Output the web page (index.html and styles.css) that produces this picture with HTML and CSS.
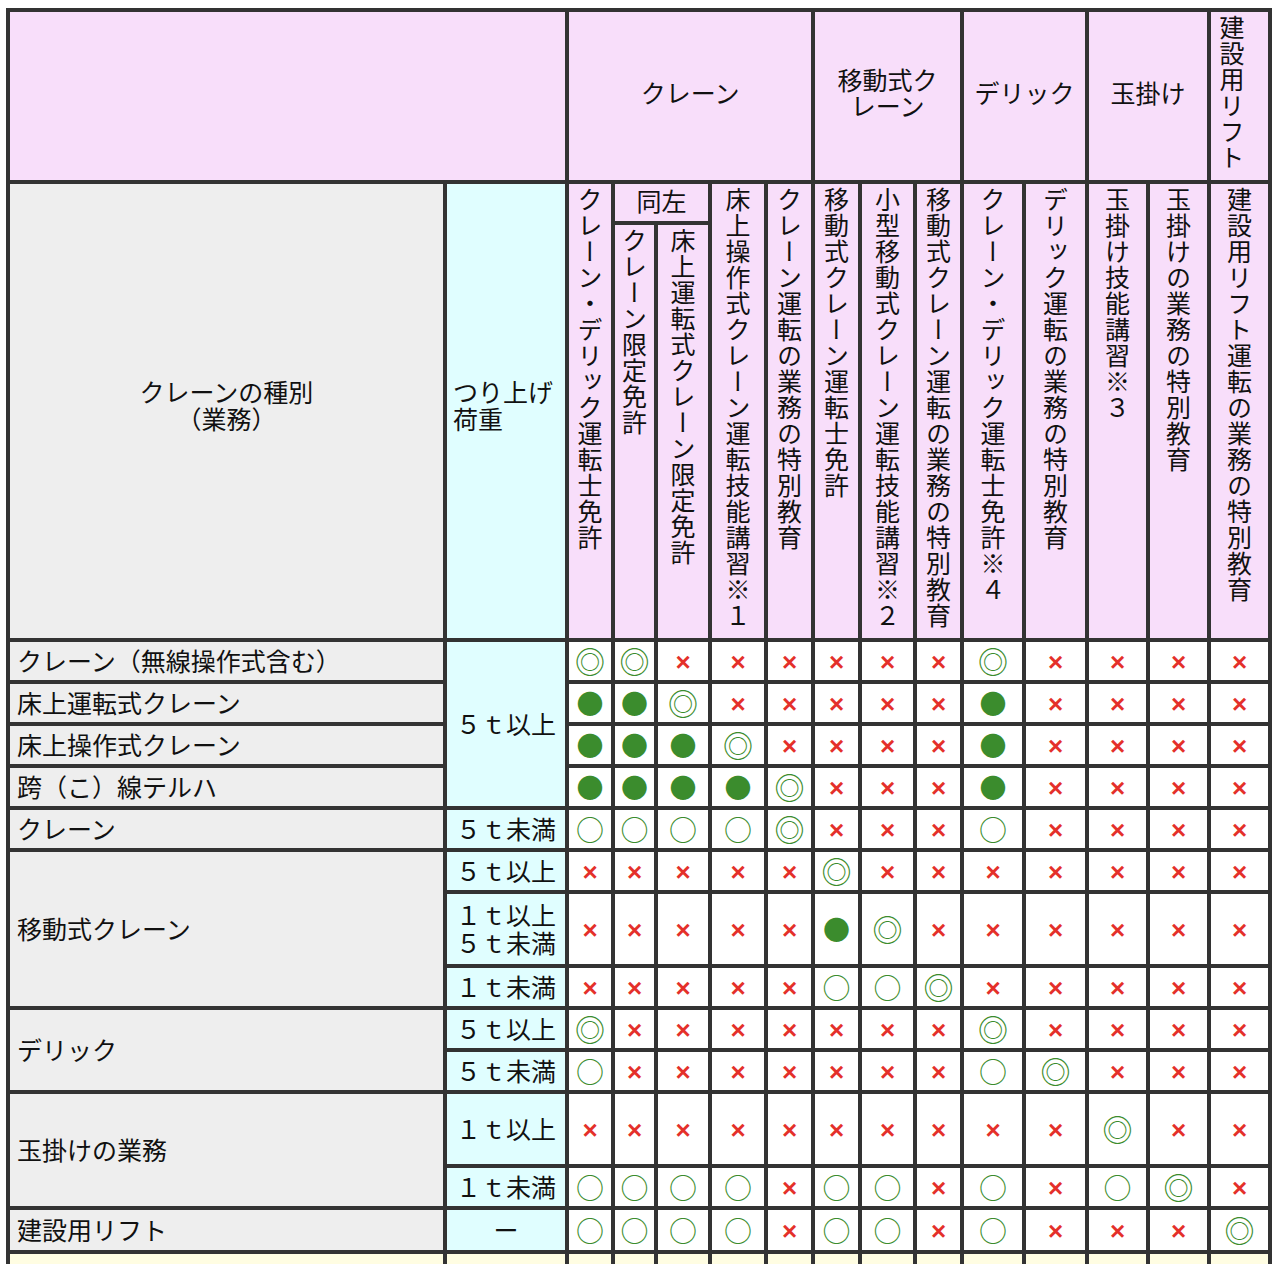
FILE: index.html
```html
<!DOCTYPE html>
<html lang="ja">
<head>
<meta charset="utf-8">
<title>クレーン等の運転資格一覧</title>
<link rel="stylesheet" href="styles.css">
</head>
<body>
<table class="chart">
<colgroup>
<col class="w437"><col class="w122"><col class="w46"><col class="w43"><col class="w54"><col class="w56"><col class="w47"><col class="w47"><col class="w55"><col class="w47"><col class="w62"><col class="w63"><col class="w61"><col class="w61"><col class="w61">
</colgroup>
<thead>
<tr class="r-group">
<th colspan="2" class="pink"></th>
<th colspan="5" class="pink grp">クレーン</th>
<th colspan="3" class="pink grp">移動式ク<br>レーン</th>
<th colspan="2" class="pink grp">デリック</th>
<th colspan="2" class="pink grp">玉掛け</th>
<th class="pink vcell vleft"><span class="vt">建設用リフト</span></th>
</tr>
<tr class="r-same">
<th rowspan="2" class="gray kind">クレーンの種別<br>（業務）</th>
<th rowspan="2" class="cyan load-h">つり上げ<br>荷重</th>
<th rowspan="2" class="pink vcell"><span class="vt">クレーン・デリック運転士免許</span></th>
<th colspan="2" class="pink same">同左</th>
<th rowspan="2" class="pink vcell"><span class="vt">床上操作式クレーン運転技能講習※１</span></th>
<th rowspan="2" class="pink vcell"><span class="vt">クレーン運転の業務の特別教育</span></th>
<th rowspan="2" class="pink vcell"><span class="vt">移動式クレーン運転士免許</span></th>
<th rowspan="2" class="pink vcell"><span class="vt">小型移動式クレーン運転技能講習※２</span></th>
<th rowspan="2" class="pink vcell"><span class="vt">移動式クレーン運転の業務の特別教育</span></th>
<th rowspan="2" class="pink vcell"><span class="vt">クレーン・デリック運転士免許※４</span></th>
<th rowspan="2" class="pink vcell"><span class="vt">デリック運転の業務の特別教育</span></th>
<th rowspan="2" class="pink vcell"><span class="vt">玉掛け技能講習※３</span></th>
<th rowspan="2" class="pink vcell"><span class="vt">玉掛けの業務の特別教育</span></th>
<th rowspan="2" class="pink vcell"><span class="vt">建設用リフト運転の業務の特別教育</span></th>
</tr>
<tr class="r-sub">
<th class="pink vcell"><span class="vt">クレーン限定免許</span></th>
<th class="pink vcell"><span class="vt">床上運転式クレーン限定免許</span></th>
</tr>
</thead>
<tbody>
<tr class="r-std">
<td class="gray kind-d">クレーン（無線操作式含む）</td>
<td rowspan="4" class="cyan load">５ｔ以上</td>
<td class="c"><span class="d">◎</span></td><td class="c"><span class="d">◎</span></td><td class="c"><span class="x">×</span></td><td class="c"><span class="x">×</span></td><td class="c"><span class="x">×</span></td><td class="c"><span class="x">×</span></td><td class="c"><span class="x">×</span></td><td class="c"><span class="x">×</span></td><td class="c"><span class="d">◎</span></td><td class="c"><span class="x">×</span></td><td class="c"><span class="x">×</span></td><td class="c"><span class="x">×</span></td><td class="c"><span class="x">×</span></td>
</tr>
<tr class="r-std">
<td class="gray kind-d">床上運転式クレーン</td>
<td class="c"><span class="f">●</span></td><td class="c"><span class="f">●</span></td><td class="c"><span class="d">◎</span></td><td class="c"><span class="x">×</span></td><td class="c"><span class="x">×</span></td><td class="c"><span class="x">×</span></td><td class="c"><span class="x">×</span></td><td class="c"><span class="x">×</span></td><td class="c"><span class="f">●</span></td><td class="c"><span class="x">×</span></td><td class="c"><span class="x">×</span></td><td class="c"><span class="x">×</span></td><td class="c"><span class="x">×</span></td>
</tr>
<tr class="r-std">
<td class="gray kind-d">床上操作式クレーン</td>
<td class="c"><span class="f">●</span></td><td class="c"><span class="f">●</span></td><td class="c"><span class="f">●</span></td><td class="c"><span class="d">◎</span></td><td class="c"><span class="x">×</span></td><td class="c"><span class="x">×</span></td><td class="c"><span class="x">×</span></td><td class="c"><span class="x">×</span></td><td class="c"><span class="f">●</span></td><td class="c"><span class="x">×</span></td><td class="c"><span class="x">×</span></td><td class="c"><span class="x">×</span></td><td class="c"><span class="x">×</span></td>
</tr>
<tr class="r-std">
<td class="gray kind-d">跨（こ）線テルハ</td>
<td class="c"><span class="f">●</span></td><td class="c"><span class="f">●</span></td><td class="c"><span class="f">●</span></td><td class="c"><span class="f">●</span></td><td class="c"><span class="d">◎</span></td><td class="c"><span class="x">×</span></td><td class="c"><span class="x">×</span></td><td class="c"><span class="x">×</span></td><td class="c"><span class="f">●</span></td><td class="c"><span class="x">×</span></td><td class="c"><span class="x">×</span></td><td class="c"><span class="x">×</span></td><td class="c"><span class="x">×</span></td>
</tr>
<tr class="r-std">
<td class="gray kind-d">クレーン</td>
<td class="cyan load">５ｔ未満</td>
<td class="c"><span class="o">○</span></td><td class="c"><span class="o">○</span></td><td class="c"><span class="o">○</span></td><td class="c"><span class="o">○</span></td><td class="c"><span class="d">◎</span></td><td class="c"><span class="x">×</span></td><td class="c"><span class="x">×</span></td><td class="c"><span class="x">×</span></td><td class="c"><span class="o">○</span></td><td class="c"><span class="x">×</span></td><td class="c"><span class="x">×</span></td><td class="c"><span class="x">×</span></td><td class="c"><span class="x">×</span></td>
</tr>
<tr class="r-std">
<td rowspan="3" class="gray kind-d">移動式クレーン</td>
<td class="cyan load">５ｔ以上</td>
<td class="c"><span class="x">×</span></td><td class="c"><span class="x">×</span></td><td class="c"><span class="x">×</span></td><td class="c"><span class="x">×</span></td><td class="c"><span class="x">×</span></td><td class="c"><span class="d">◎</span></td><td class="c"><span class="x">×</span></td><td class="c"><span class="x">×</span></td><td class="c"><span class="x">×</span></td><td class="c"><span class="x">×</span></td><td class="c"><span class="x">×</span></td><td class="c"><span class="x">×</span></td><td class="c"><span class="x">×</span></td>
</tr>
<tr class="r-tall">
<td class="cyan load two">１ｔ以上<br>５ｔ未満</td>
<td class="c"><span class="x">×</span></td><td class="c"><span class="x">×</span></td><td class="c"><span class="x">×</span></td><td class="c"><span class="x">×</span></td><td class="c"><span class="x">×</span></td><td class="c"><span class="f">●</span></td><td class="c"><span class="d">◎</span></td><td class="c"><span class="x">×</span></td><td class="c"><span class="x">×</span></td><td class="c"><span class="x">×</span></td><td class="c"><span class="x">×</span></td><td class="c"><span class="x">×</span></td><td class="c"><span class="x">×</span></td>
</tr>
<tr class="r-std">
<td class="cyan load">１ｔ未満</td>
<td class="c"><span class="x">×</span></td><td class="c"><span class="x">×</span></td><td class="c"><span class="x">×</span></td><td class="c"><span class="x">×</span></td><td class="c"><span class="x">×</span></td><td class="c"><span class="o">○</span></td><td class="c"><span class="o">○</span></td><td class="c"><span class="d">◎</span></td><td class="c"><span class="x">×</span></td><td class="c"><span class="x">×</span></td><td class="c"><span class="x">×</span></td><td class="c"><span class="x">×</span></td><td class="c"><span class="x">×</span></td>
</tr>
<tr class="r-std">
<td rowspan="2" class="gray kind-d">デリック</td>
<td class="cyan load">５ｔ以上</td>
<td class="c"><span class="d">◎</span></td><td class="c"><span class="x">×</span></td><td class="c"><span class="x">×</span></td><td class="c"><span class="x">×</span></td><td class="c"><span class="x">×</span></td><td class="c"><span class="x">×</span></td><td class="c"><span class="x">×</span></td><td class="c"><span class="x">×</span></td><td class="c"><span class="d">◎</span></td><td class="c"><span class="x">×</span></td><td class="c"><span class="x">×</span></td><td class="c"><span class="x">×</span></td><td class="c"><span class="x">×</span></td>
</tr>
<tr class="r-std">
<td class="cyan load">５ｔ未満</td>
<td class="c"><span class="o">○</span></td><td class="c"><span class="x">×</span></td><td class="c"><span class="x">×</span></td><td class="c"><span class="x">×</span></td><td class="c"><span class="x">×</span></td><td class="c"><span class="x">×</span></td><td class="c"><span class="x">×</span></td><td class="c"><span class="x">×</span></td><td class="c"><span class="o">○</span></td><td class="c"><span class="d">◎</span></td><td class="c"><span class="x">×</span></td><td class="c"><span class="x">×</span></td><td class="c"><span class="x">×</span></td>
</tr>
<tr class="r-tall">
<td rowspan="2" class="gray kind-d">玉掛けの業務</td>
<td class="cyan load">１ｔ以上</td>
<td class="c"><span class="x">×</span></td><td class="c"><span class="x">×</span></td><td class="c"><span class="x">×</span></td><td class="c"><span class="x">×</span></td><td class="c"><span class="x">×</span></td><td class="c"><span class="x">×</span></td><td class="c"><span class="x">×</span></td><td class="c"><span class="x">×</span></td><td class="c"><span class="x">×</span></td><td class="c"><span class="x">×</span></td><td class="c"><span class="d">◎</span></td><td class="c"><span class="x">×</span></td><td class="c"><span class="x">×</span></td>
</tr>
<tr class="r-std">
<td class="cyan load">１ｔ未満</td>
<td class="c"><span class="o">○</span></td><td class="c"><span class="o">○</span></td><td class="c"><span class="o">○</span></td><td class="c"><span class="o">○</span></td><td class="c"><span class="x">×</span></td><td class="c"><span class="o">○</span></td><td class="c"><span class="o">○</span></td><td class="c"><span class="x">×</span></td><td class="c"><span class="o">○</span></td><td class="c"><span class="x">×</span></td><td class="c"><span class="o">○</span></td><td class="c"><span class="d">◎</span></td><td class="c"><span class="x">×</span></td>
</tr>
<tr class="r-last">
<td class="gray kind-d">建設用リフト</td>
<td class="cyan load">ー</td>
<td class="c"><span class="o">○</span></td><td class="c"><span class="o">○</span></td><td class="c"><span class="o">○</span></td><td class="c"><span class="o">○</span></td><td class="c"><span class="x">×</span></td><td class="c"><span class="o">○</span></td><td class="c"><span class="o">○</span></td><td class="c"><span class="x">×</span></td><td class="c"><span class="o">○</span></td><td class="c"><span class="x">×</span></td><td class="c"><span class="x">×</span></td><td class="c"><span class="x">×</span></td><td class="c"><span class="d">◎</span></td>
</tr>
<tr class="r-foot">
<td class="yellow"></td><td class="yellow"></td><td class="yellow"></td><td class="yellow"></td><td class="yellow"></td><td class="yellow"></td><td class="yellow"></td><td class="yellow"></td><td class="yellow"></td><td class="yellow"></td><td class="yellow"></td><td class="yellow"></td><td class="yellow"></td><td class="yellow"></td><td class="yellow"></td>
</tr>
</tbody>
</table>
</body>
</html>
```

FILE: styles.css
```css
html, body {
  margin: 0;
  padding: 0;
  background: #ffffff;
}

body {
  padding: 8px 0 0 6px;
  font-family: "Noto Sans CJK JP", "Liberation Serif", sans-serif;
  color: #111111;
}

.chart {
  border-collapse: collapse;
  table-layout: fixed;
  width: 1266px;
  font-size: 25px;
  line-height: 26px;
}

th, td {
  border: 4px solid #333333;
  padding: 0;
  font-weight: normal;
  box-sizing: border-box;
  vertical-align: middle;
}

.w437 { width: 437px; }
.w122 { width: 122px; }
.w46 { width: 46px; }
.w43 { width: 43px; }
.w54 { width: 54px; }
.w56 { width: 56px; }
.w47 { width: 47px; }
.w55 { width: 55px; }
.w62 { width: 62px; }
.w63 { width: 63px; }
.w61 { width: 61px; }

.r-group { height: 172px; }
.r-same { height: 41px; }
.r-sub { height: 417px; }
.r-std { height: 42px; }
.r-tall { height: 74px; }
.r-last { height: 44px; }
.r-foot { height: 40px; }

.pink { background: #f8defa; }
.gray { background: #eeeeee; }
.cyan { background: #e0feff; }
.yellow { background: #fffde2; }

.grp {
  text-align: center;
  padding-bottom: 8px;
}

.same {
  text-align: center;
  padding-bottom: 5px;
}

.vcell {
  vertical-align: top;
  text-align: center;
  padding-top: 3px;
}

.vleft {
  text-align: left;
  padding-left: 8px;
}

.vt {
  display: inline-block;
  writing-mode: vertical-rl;
  letter-spacing: 1px;
  line-height: 26px;
}

.kind {
  text-align: center;
  padding-bottom: 12px;
  line-height: 27px;
}

.load-h {
  text-align: left;
  padding-left: 6px;
  padding-bottom: 12px;
  line-height: 27px;
}

.kind-d {
  text-align: left;
  padding-left: 7px;
  padding-bottom: 2px;
}

.load {
  text-align: center;
  padding-bottom: 2px;
}

.two {
  line-height: 28px;
}

.c {
  background: #ffffff;
  text-align: center;
}

.d, .o, .f {
  color: #3b8c2d;
  font-family: "Noto Sans CJK JP", sans-serif;
}

.o { font-size: 28px; }
.f { font-size: 27px; }
.d { font-size: 30px; }

.x {
  color: #e4302a;
  font-family: "Liberation Sans", sans-serif;
  font-weight: bold;
  font-size: 26px;
}
```
